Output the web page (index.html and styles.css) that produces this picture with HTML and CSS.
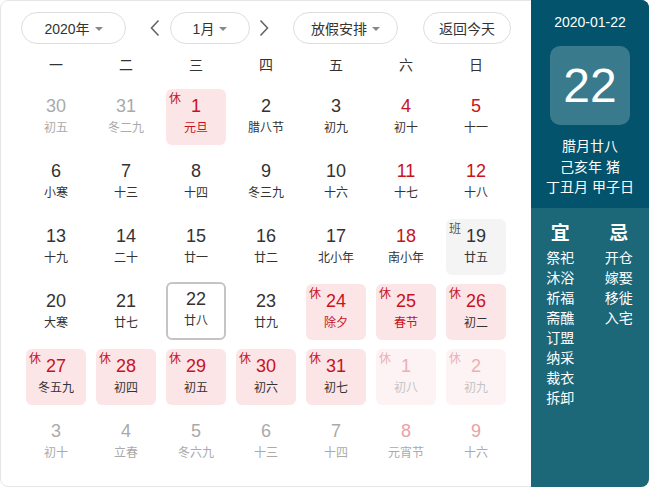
FILE: index.html
```html
<!DOCTYPE html>
<html lang="zh-CN">
<head>
<meta charset="utf-8">
<title>日历</title>
<link rel="stylesheet" href="styles.css">
</head>
<body>
<div class="calendar">
  <div class="main">
    <div class="toolbar">
      <div class="btn btn-year">2020年<span class="caret"></span></div>
      <div class="arrow arrow-prev"><svg width="12" height="18" viewBox="0 0 12 18"><path d="M9.5 1.5 L2.5 9 L9.5 16.5" fill="none" stroke="#666" stroke-width="1.6"/></svg></div>
      <div class="btn btn-month">1月<span class="caret"></span></div>
      <div class="arrow arrow-next"><svg width="12" height="18" viewBox="0 0 12 18"><path d="M2.5 1.5 L9.5 9 L2.5 16.5" fill="none" stroke="#666" stroke-width="1.6"/></svg></div>
      <div class="btn btn-holiday">放假安排<span class="caret"></span></div>
      <div class="btn btn-today">返回今天</div>
    </div>
    <div class="weekdays">
      <span>一</span><span>二</span><span>三</span><span>四</span><span>五</span><span>六</span><span>日</span>
    </div>
    <div class="grid">
      <div class="cell other"><div class="num">30</div><div class="lunar">初五</div></div>
      <div class="cell other"><div class="num">31</div><div class="lunar">冬二九</div></div>
      <div class="cell rest"><span class="tag">休</span><div class="num">1</div><div class="lunar fest">元旦</div></div>
      <div class="cell"><div class="num">2</div><div class="lunar">腊八节</div></div>
      <div class="cell"><div class="num">3</div><div class="lunar">初九</div></div>
      <div class="cell weekend"><div class="num">4</div><div class="lunar">初十</div></div>
      <div class="cell weekend"><div class="num">5</div><div class="lunar">十一</div></div>

      <div class="cell"><div class="num">6</div><div class="lunar">小寒</div></div>
      <div class="cell"><div class="num">7</div><div class="lunar">十三</div></div>
      <div class="cell"><div class="num">8</div><div class="lunar">十四</div></div>
      <div class="cell"><div class="num">9</div><div class="lunar">冬三九</div></div>
      <div class="cell"><div class="num">10</div><div class="lunar">十六</div></div>
      <div class="cell weekend"><div class="num">11</div><div class="lunar">十七</div></div>
      <div class="cell weekend"><div class="num">12</div><div class="lunar">十八</div></div>

      <div class="cell"><div class="num">13</div><div class="lunar">十九</div></div>
      <div class="cell"><div class="num">14</div><div class="lunar">二十</div></div>
      <div class="cell"><div class="num">15</div><div class="lunar">廿一</div></div>
      <div class="cell"><div class="num">16</div><div class="lunar">廿二</div></div>
      <div class="cell"><div class="num">17</div><div class="lunar">北小年</div></div>
      <div class="cell weekend"><div class="num">18</div><div class="lunar">南小年</div></div>
      <div class="cell work"><span class="tag">班</span><div class="num">19</div><div class="lunar">廿五</div></div>

      <div class="cell"><div class="num">20</div><div class="lunar">大寒</div></div>
      <div class="cell"><div class="num">21</div><div class="lunar">廿七</div></div>
      <div class="cell today"><div class="num">22</div><div class="lunar">廿八</div></div>
      <div class="cell"><div class="num">23</div><div class="lunar">廿九</div></div>
      <div class="cell rest"><span class="tag">休</span><div class="num">24</div><div class="lunar fest">除夕</div></div>
      <div class="cell rest"><span class="tag">休</span><div class="num">25</div><div class="lunar fest">春节</div></div>
      <div class="cell rest"><span class="tag">休</span><div class="num">26</div><div class="lunar">初二</div></div>

      <div class="cell rest"><span class="tag">休</span><div class="num">27</div><div class="lunar">冬五九</div></div>
      <div class="cell rest"><span class="tag">休</span><div class="num">28</div><div class="lunar">初四</div></div>
      <div class="cell rest"><span class="tag">休</span><div class="num">29</div><div class="lunar">初五</div></div>
      <div class="cell rest"><span class="tag">休</span><div class="num">30</div><div class="lunar">初六</div></div>
      <div class="cell rest"><span class="tag">休</span><div class="num">31</div><div class="lunar">初七</div></div>
      <div class="cell rest faded"><span class="tag">休</span><div class="num">1</div><div class="lunar">初八</div></div>
      <div class="cell rest faded"><span class="tag">休</span><div class="num">2</div><div class="lunar">初九</div></div>

      <div class="cell other"><div class="num">3</div><div class="lunar">初十</div></div>
      <div class="cell other"><div class="num">4</div><div class="lunar">立春</div></div>
      <div class="cell other"><div class="num">5</div><div class="lunar">冬六九</div></div>
      <div class="cell other"><div class="num">6</div><div class="lunar">十三</div></div>
      <div class="cell other"><div class="num">7</div><div class="lunar">十四</div></div>
      <div class="cell other weekend-other"><div class="num">8</div><div class="lunar">元宵节</div></div>
      <div class="cell other weekend-other"><div class="num">9</div><div class="lunar">十六</div></div>
    </div>
  </div>
  <div class="side">
    <div class="side-top">
      <div class="side-date">2020-01-22</div>
      <div class="side-day">22</div>
      <div class="side-lunar">
        <div>腊月廿八</div>
        <div>己亥年 猪</div>
        <div>丁丑月 甲子日</div>
      </div>
    </div>
    <div class="side-bottom">
      <div class="yj">
        <div class="yj-title">宜</div>
        <div>祭祀</div><div>沐浴</div><div>祈福</div><div>斋醮</div><div>订盟</div><div>纳采</div><div>裁衣</div><div>拆卸</div>
      </div>
      <div class="yj">
        <div class="yj-title">忌</div>
        <div>开仓</div><div>嫁娶</div><div>移徙</div><div>入宅</div>
      </div>
    </div>
  </div>
</div>
</body>
</html>
```
FILE: styles.css
```css
* { box-sizing: border-box; }
html, body { margin: 0; padding: 0; background: #fff; }
body {
  font-family: "Liberation Sans", "Noto Sans CJK SC", sans-serif;
  color: #333;
}
.calendar {
  display: flex;
  width: 649px;
  height: 487px;
  border: 1px solid #e6e6e6;
  border-radius: 8px;
}
.main {
  width: 530px;
  padding: 11px 0 0 20px;
}
.toolbar {
  display: flex;
  align-items: center;
  height: 32px;
}
.btn {
  height: 32px;
  border: 1px solid #dedede;
  border-radius: 16px;
  display: flex;
  align-items: center;
  justify-content: center;
  font-size: 14px;
  color: #333;
}
.btn-year { width: 105px; }
.btn-month { width: 80px; margin-left: 5px; }
.btn-holiday { width: 105px; margin-left: 19px; }
.btn-today { width: 88px; margin-left: 25px; }
.caret {
  display: inline-block;
  width: 0; height: 0;
  border-left: 4px solid transparent;
  border-right: 4px solid transparent;
  border-top: 4px solid #888;
  margin-left: 5px;
  margin-top: 1px;
}
.arrow {
  width: 20px;
  height: 32px;
  display: flex;
  align-items: center;
  justify-content: center;
}
.arrow-prev { margin-left: 19px; }
.arrow-next { margin-left: 4px; }
.weekdays {
  display: grid;
  grid-template-columns: repeat(7, 70px);
  height: 45px;
  line-height: 42px;
  text-align: center;
  font-size: 14px;
  color: #333;
}
.grid {
  display: grid;
  grid-template-columns: repeat(7, 70px);
  grid-auto-rows: 65px;
}
.cell {
  position: relative;
  margin: 0 5px;
  height: 56px;
  border-radius: 6px;
  text-align: center;
  padding-top: 6px;
}
.num {
  font-size: 18px;
  line-height: 22px;
  color: #333;
}
.lunar {
  font-size: 12px;
  line-height: 16px;
  margin-top: 3px;
  color: #333;
}
.tag {
  position: absolute;
  left: 3px;
  top: 2px;
  font-size: 12px;
  line-height: 16px;
  color: #c8121d;
}
.weekend .num { color: #c8121d; }
.other .num, .other .lunar { color: #aaa; }
.weekend-other .num { color: #e9a1a6; }
.rest { background: #fbe5e7; }
.rest .num { color: #c8121d; }
.rest .fest { color: #c8121d; }
.faded { background: #fdf3f4; }
.faded .tag, .faded .num { color: #ebb0b5; }
.faded .lunar { color: #c4c4c4; }
.work { background: #f4f4f4; }
.work .tag { color: #555; }
.today {
  border: 2px solid #c4c4c4;
  padding-top: 4px;
  height: 58px;
  margin-top: -2px;
}
.side {
  width: 118px;
  margin: -1px -1px -1px 0;
  border-radius: 0 8px 8px 0;
  background: #1c6778;
  color: #fff;
  display: flex;
  flex-direction: column;
}
.side-top {
  background: #02536b;
  border-radius: 0 8px 0 0;
  height: 208px;
  padding-top: 13px;
  text-align: center;
}
.side-date {
  font-size: 14px;
  line-height: 18px;
}
.side-day {
  width: 80px;
  height: 79px;
  margin: 15px auto 0;
  border-radius: 10px;
  background: #3a7a8d;
  font-size: 48px;
  line-height: 79px;
}
.side-lunar {
  margin-top: 11px;
  font-size: 14px;
  line-height: 20.5px;
}
.side-bottom {
  display: flex;
  padding: 14px 0 0 0;
}
.yj {
  width: 58.5px;
  text-align: center;
  font-size: 14px;
  line-height: 20px;
}
.yj-title {
  font-size: 19px;
  font-weight: bold;
  line-height: 24px;
  margin-bottom: 2px;
}
```
